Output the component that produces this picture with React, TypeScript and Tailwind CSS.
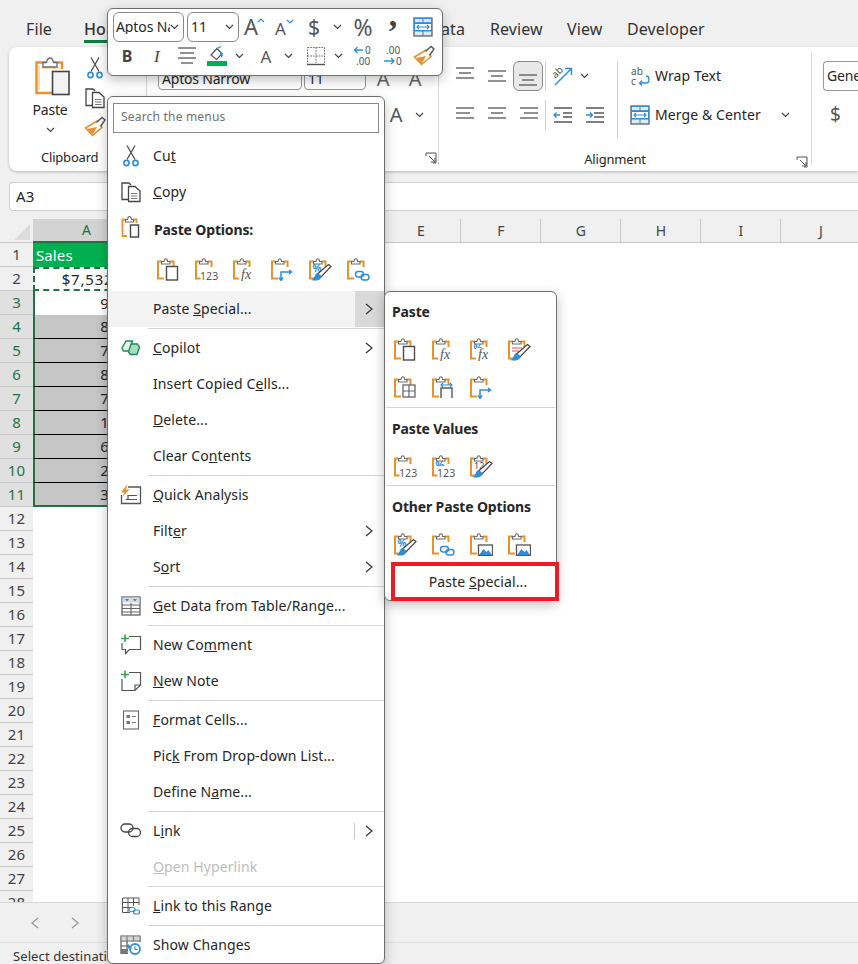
import React from "react";

const O = "#e8912d";
const G = "#6a6a6a";
const B = "#2e8fd8";
const D = "#4a4a4a";

function S({ w = 24, h = 24, vb, children, className = "" }: { w?: number; h?: number; vb?: string; children?: React.ReactNode; className?: string }) {
  return (
    <svg width={w} height={h} viewBox={vb ?? `0 0 ${w} ${h}`} fill="none" className={`shrink-0 ${className}`}>
      {children}
    </svg>
  );
}

function Clip({ children }: { children?: React.ReactNode }) {
  return (
    <S>
      <path d="M6 4.5H2V21.5H8" stroke={O} strokeWidth="2" />
      <path d="M13.5 4.5H17.5V10" stroke={O} strokeWidth="2" />
      <path d="M5.5 7V4.5H8C8.2 2.8 8.9 1.8 9.8 1.8S11.4 2.8 11.6 4.5H14V7Z" stroke={G} fill="#fff" strokeWidth="1.1" />
      {children}
    </S>
  );
}

const Page = () => <rect x="10.5" y="9.5" width="11" height="13.5" stroke={D} strokeWidth="1.4" fill="#fff" />;
const Num = ({ t = "123" }: { t?: string }) => (
  <>
    <rect x="6.5" y="12" width="17.5" height="12" fill="#fff" />
    <text x="6" y="23" fontSize="10.5" fill="#555" fontFamily="Noto Sans, sans-serif">{t}</text>
  </>
);
const Fx = () => (
  <>
    <rect x="7" y="11" width="17" height="13" fill="#fff" />
    <text x="9" y="22" fontSize="14" fontStyle="italic" fill="#555" fontFamily="Liberation Serif, serif">fx</text>
  </>
);
const Pct = () => <text x="4.5" y="15" fontSize="10" fontWeight="700" fill={B} fontFamily="Noto Sans, sans-serif">%</text>;
const Trans = () => (
  <>
    <rect x="8" y="11" width="16" height="13" fill="#fff" />
    <path d="M11 23V15H21M19 13L21.5 15L19 17M9 20.5L11 23.5L13 20.5" stroke={B} strokeWidth="1.5" />
  </>
);
const Brush = () => (
  <>
    <path d="M9.5 17L20.5 7.5L23 9.5L13 20Z" fill="#fff" stroke="#444" strokeWidth="1.2" />
    <path d="M8 16.5C12 16.5 14 19 13 21C11.5 24 6 24 3.5 23C6 22 6.5 19 8 16.5Z" fill={B} />
  </>
);
const Chain = () => (
  <>
    <rect x="8" y="13" width="16" height="11" fill="#fff" />
    <rect x="9.5" y="14.5" width="8" height="5.5" rx="2.7" stroke={B} strokeWidth="1.4" />
    <rect x="15" y="17.5" width="8" height="5.5" rx="2.7" stroke={B} strokeWidth="1.4" />
  </>
);
const Pic = () => (
  <>
    <rect x="9.5" y="13" width="14" height="10.5" fill="#fff" stroke="#555" strokeWidth="1.3" />
    <path d="M10 23L14.5 17L17.5 20L19.5 18L23 23Z" fill={B} />
  </>
);

const scissors = (
  <S w={20} h={24}>
    <path d="M6 15.5L14 1.5M14 15.5L6 1.5" stroke="#444" strokeWidth="1.2" />
    <circle cx="5.5" cy="19" r="2.6" stroke={B} strokeWidth="1.6" />
    <circle cx="14.5" cy="19" r="2.6" stroke={B} strokeWidth="1.6" />
  </S>
);
const copy = (
  <S w={22} h={22}>
    <path d="M8.5 18.5H2V2H9L11 4" stroke="#444" strokeWidth="1.3" />
    <path d="M8.5 5.5H15L20 10V20.5H8.5Z" stroke="#444" strokeWidth="1.3" fill="#fff" />
    <path d="M11 12.5H17.5M11 15H17.5M11 17.5H17.5" stroke="#777" strokeWidth="1" />
  </S>
);
const painter = (
  <S w={22} h={22}>
    <path d="M1.5 12L13 5L18 11.5L8.5 19.5Z" stroke={O} strokeWidth="1.6" fill="#fff" />
    <path d="M3 13L13 11L8.5 19Z" fill={O} />
    <path d="M12.5 6.5L18 1.5L21 4L16.5 10.5" stroke="#555" strokeWidth="1.4" fill="#fff" />
  </S>
);
const pasteSmall = (
  <S w={20} h={26} vb="0 0 20 26">
    <path d="M5 4.5H1.5V21H6" stroke={O} strokeWidth="1.8" />
    <path d="M12 4.5H15.5V8" stroke={O} strokeWidth="1.8" />
    <path d="M4.5 7V4.5H6.5C6.7 3 7.4 1.5 8.5 1.5S10.3 3 10.5 4.5H12.5V7Z" stroke={G} fill="#fff" strokeWidth="1.1" />
    <rect x="9.5" y="10" width="8" height="12" fill="#fff" stroke="#444" strokeWidth="1.4" />
  </S>
);
const pasteBig = (
  <S w={36} h={40}>
    <path d="M11 5.5H1.5V36H18" stroke={O} strokeWidth="2.4" />
    <path d="M19 5.5H27V12" stroke={O} strokeWidth="2.4" />
    <path d="M6 11H25" stroke="#fbdcae" strokeWidth="2" />
    <path d="M4 8V33" stroke="#fbdcae" strokeWidth="2" />
    <path d="M8 10V5.5H11.5C12 3 13.5 1 15 1S18 3 18.5 5.5H22V10Z" stroke={G} fill="#fff" strokeWidth="1.3" />
    <rect x="17.5" y="14.5" width="16.5" height="23" fill="#f3f3f3" stroke="#444" strokeWidth="1.6" />
  </S>
);
const copilot = (
  <S w={20} h={18}>
    <path d="M5 2H11.5L8.5 12H2.5L1 9Z" stroke="#1f8a55" strokeWidth="1.4" fill="#e4f5ea" />
    <path d="M10 5H16.5L18.5 8L16 15.5H9.5L7.5 13Z" stroke="#1f8a55" strokeWidth="1.4" fill="#a9dcbd" />
  </S>
);
const quick = (
  <S w={22} h={22}>
    <path d="M8 3H20.5V19.5H1.5V11" stroke="#555" strokeWidth="1.3" />
    <path d="M5.5 15.5H17M8 15.5V11.5H17" stroke="#555" strokeWidth="1.2" />
    <path d="M7.5 0L1 8.5H4.5L2 13L9.5 5.5H6Z" fill={O} />
  </S>
);
const getData = (
  <S w={20} h={20}>
    <rect x="1" y="1" width="18" height="18" stroke="#555" strokeWidth="1.2" fill="#fff" />
    <rect x="1.5" y="1.5" width="17" height="5" fill="#d9d9d9" />
    <path d="M4 3L6 5.5L8 3ZM12 3L14 5.5L16 3Z" fill={B} />
    <path d="M1 9H19M1 12.5H19M1 16H19M10 7V19" stroke="#666" strokeWidth="1.2" />
  </S>
);
const comment = (
  <S w={22} h={22}>
    <path d="M9 2.5H20.5V15.5H9.5L5.5 19.5V15.5H2V9" stroke="#555" strokeWidth="1.2" />
    <path d="M5 0.5V8M1 4.5H9" stroke="#2ea64f" strokeWidth="1.6" />
  </S>
);
const note = (
  <S w={22} h={22}>
    <path d="M9 2.5H20.5V15L15 20.5H2V9" stroke="#555" strokeWidth="1.2" />
    <path d="M20.5 15H15V20.5" stroke="#555" strokeWidth="1.2" />
    <path d="M5 0.5V8M1 4.5H9" stroke="#2ea64f" strokeWidth="1.6" />
  </S>
);
const format = (
  <S w={18} h={20}>
    <rect x="1.5" y="1" width="15" height="18" stroke="#666" strokeWidth="1.1" />
    <rect x="4.5" y="5" width="3.5" height="3" fill="#777" />
    <rect x="4.5" y="11" width="3.5" height="3" fill="#777" />
    <path d="M10 6.5H14M10 12.5H14" stroke="#777" strokeWidth="1.1" />
  </S>
);
const link = (
  <S w={22} h={18}>
    <rect x="1" y="2" width="12" height="8" rx="4" stroke="#444" strokeWidth="1.3" />
    <rect x="8.5" y="6.5" width="12" height="8" rx="4" stroke="#444" strokeWidth="1.3" />
  </S>
);
const linkRange = (
  <S w={20} h={20}>
    <path d="M9 16.5H1.5V2H18V9M1.5 6.5H18M7 2V16M12.5 2V10M1.5 11.5H10" stroke="#555" strokeWidth="1" />
    <rect x="8" y="11.5" width="6" height="4" rx="2" stroke={B} strokeWidth="1.2" />
    <rect x="12.5" y="14" width="6" height="4" rx="2" stroke={B} strokeWidth="1.2" />
  </S>
);
const changes = (
  <S w={22} h={22}>
    <path d="M8 19.5H1V2H20V8M1 7H20M7 2V19M13.5 2V7M1 12H8M1 16H8" stroke="#555" strokeWidth="1.2" />
    <rect x="1" y="2" width="19" height="5" fill="#aaa" opacity="0.5" />
    <rect x="1" y="15" width="6" height="5" fill="#777" />
    <circle cx="15" cy="15" r="5" fill="#fff" stroke={B} strokeWidth="1.8" />
    <path d="M15 12.5V15.5H17.5" stroke={B} strokeWidth="1.2" />
    <path d="M8 10V14.5H12.5Z" fill={B} />
  </S>
);

const chev = (
  <svg width="10" height="14" viewBox="0 0 10 14" fill="none" className="shrink-0">
    <path d="M2 2L8 7L2 12" stroke="#333" strokeWidth="1.2" />
  </svg>
);
const Down = () => (
  <svg width="9" height="6" viewBox="0 0 9 6" fill="none" className="shrink-0">
    <path d="M1 1L4.5 4.5L8 1" stroke="#444" strokeWidth="1.2" />
  </svg>
);

type Row = { icon?: React.ReactNode; label: React.ReactNode; sub?: boolean; dis?: boolean; bar?: boolean };
const Item = ({ icon, label, sub, dis, bar }: Row) => (
  <div className="flex h-9 items-center">
    <div className="flex w-[45px] justify-center">{icon}</div>
    <div className={`flex-1 ${dis ? "text-[#bdbdbd]" : ""}`}>{label}</div>
    {bar && <div className="h-4 w-px bg-[#c8c8c8]" />}
    {sub && <div className="flex w-[29px] justify-center pr-[2px]">{chev}</div>}
  </div>
);
const Sep = () => (
  <div className="flex h-[3px] items-center pl-[40px]">
    <div className="h-px w-full bg-[#d4d4d4]" />
  </div>
);

function AlignLines({ ys, widths }: { ys: number[]; widths: [number, number][] }) {
  return (
    <S w={20} h={20}>
      {ys.map((y, i) => (
        <path key={i} d={`M${widths[i][0]} ${y}H${widths[i][1]}`} stroke="#555" strokeWidth="1.3" />
      ))}
    </S>
  );
}
const L3: [number, number][] = [[1, 19], [4, 16], [1, 19]];
const Indent = ({ flip }: { flip?: boolean }) => (
  <S w={20} h={20}>
    <path d="M1 3H19M1 17H19" stroke="#555" strokeWidth="1.3" />
    <path d={flip ? "M9 8H19M9 12H19" : "M10 8H19M10 12H19"} stroke="#555" strokeWidth="1.3" />
    <path d={flip ? "M1 10H7M5 7.5L7.5 10L5 12.5" : "M1 10H7M3.5 7.5L1 10L3.5 12.5"} stroke={B} strokeWidth="1.4" />
  </S>
);
const mergeIcon = (size: number) => (
  <svg width={size} height={size} viewBox="0 0 20 20" fill="none" className="shrink-0">
    <rect x="1" y="1" width="18" height="18" fill="#d8ecfa" stroke="#555" strokeWidth="1.2" />
    <path d="M1 6H19M1 14H19M10 1V6M10 14V19" stroke="#777" strokeWidth="1" />
    <path d="M1.5 1.5H18.5V5.5H1.5Z" stroke={B} strokeWidth="0.8" />
    <rect x="1.5" y="6.5" width="17" height="7" fill="#fff" stroke={B} strokeWidth="1" />
    <path d="M4 10H16M6 8L4 10L6 12M14 8L16 10L14 12" stroke={B} strokeWidth="1.2" />
  </svg>
);
const launcher = (
  <svg width="12" height="12" viewBox="0 0 12 12" fill="none" className="shrink-0">
    <path d="M1 4V1H11V11H8M4 4L10 10M10 6V10H6" stroke="#555" strokeWidth="1" />
  </svg>
);
const C = ({ w = "w-[30px]", children }: { w?: string; children?: React.ReactNode }) => <div className={`flex ${w} items-center justify-center`}>{children}</div>;

const rowVals: Record<number, string> = { 3: "91.00", 4: "84.00", 5: "73.00", 6: "81.00", 7: "74.00", 8: "16.00", 9: "65.00", 10: "28.00", 11: "32.00" };

export default function App() {
  const rows = Array.from({ length: 28 }, (_, i) => i + 1);
  return (
    <div className="relative flex h-[964px] w-[858px] flex-col overflow-hidden bg-[#f0f0f0] font-['Noto_Sans',sans-serif] text-[14px] leading-none tracking-[0.1px] text-[#262626]">
      {/* Tabs */}
      <div className="flex h-[47px] shrink-0 items-center whitespace-nowrap pl-[26px] pt-[10px] text-[16px] text-[#333]">
        <span className="w-[58px]">File</span>
        <span className="relative w-[112px] font-medium">
          Home
          <span className="absolute -bottom-[6px] left-0 h-[3px] w-[30px] bg-[#0f7b3f]" />
        </span>
        <span className="w-[233px]">Insert</span>
        <span className="mr-[25px] w-[36px] text-right">Data</span>
        <span className="mr-[25px] w-[52px]">Review</span>
        <span className="mr-[24px] w-[36px]">View</span>
        <span>Developer</span>
      </div>

      {/* Ribbon */}
      <div className="ml-[9px] flex h-[124px] shrink-0 rounded-l-lg bg-white text-[13px] tracking-[-0.2px] shadow-[0_1px_3px_rgba(0,0,0,0.25)]">
        <div className="my-[6px] flex w-[138px] shrink-0 flex-col border-r border-[#d8d8d8]">
          <div className="flex h-[90px]">
            <div className="ml-[16px] flex w-[50px] flex-col items-center pt-[4px]">
              <div className="ml-[6px]">{pasteBig}</div>
              <span className="mt-[6px] text-[14px]">Paste</span>
              <span className="mt-[10px]"><Down /></span>
            </div>
            <div className="ml-[8px] flex w-[24px] flex-col items-center gap-[7px] pt-[3px]">
              {scissors}
              {copy}
              {painter}
            </div>
          </div>
          <div className="mt-[8px] pl-[32px] text-[13px]">Clipboard</div>
        </div>
        <div className="my-[6px] flex w-[292px] shrink-0 flex-col border-r border-[#d8d8d8]">
          <div className="ml-[11px] mt-[14px] flex items-center gap-[2px]">
            <div className="flex h-[23px] w-[144px] items-center rounded border border-[#999] px-[3px] text-[14px]">Aptos Narrow</div>
            <div className="flex h-[23px] w-[62px] items-center rounded border border-[#999] px-[3px] text-[14px]">11</div>
            <div className="ml-[0px] flex text-[20px] text-[#666]">
              <C w="w-[30px]">A</C>
              <C w="w-[34px]">A</C>
            </div>
          </div>
          <div className="ml-[234px] mt-[10px] flex h-[30px] items-center">
            <C><span className="text-[20px] text-[#555]">A</span></C>
            <C w="w-[16px]"><Down /></C>
          </div>
          <div className="mb-[-3px] mt-auto flex h-[16px] justify-end pr-[1px]">{launcher}</div>
        </div>
        <div className="my-[6px] flex w-[373px] shrink-0 flex-col border-r border-[#d8d8d8]">
          <div className="flex">
            <div className="flex flex-col gap-[9px] pl-[10px] pt-[8px]">
              <div className="flex h-[30px] items-center">
                <C w="w-[32px]"><AlignLines ys={[2, 7, 12]} widths={L3} /></C>
                <C w="w-[32px]"><AlignLines ys={[5, 10, 15]} widths={L3} /></C>
                <div className="flex h-[30px] w-[30px] items-center justify-center rounded-md border border-[#8a8a8a] bg-[#e8e8e8]"><AlignLines ys={[9, 14, 19]} widths={L3} /></div>
                <div className="ml-[2px] h-[30px] w-px bg-[#d0d0d0]" />
                <div className="ml-[6px]">
                  <S w={22} h={22}>
                    <path d="M3 20L19 4M13 3.5H19.5V10" stroke={B} strokeWidth="1.5" />
                    <text x="0" y="11" fontSize="10" fill="#555" transform="rotate(-45 5 8)" fontFamily="Noto Sans, sans-serif">ab</text>
                  </S>
                </div>
                <div className="ml-[6px]"><Down /></div>
              </div>
              <div className="flex h-[30px] items-center">
                <C w="w-[32px]"><AlignLines ys={[3, 8, 13]} widths={[[1, 19], [1, 15], [1, 19]]} /></C>
                <C w="w-[32px]"><AlignLines ys={[3, 8, 13]} widths={L3} /></C>
                <C w="w-[32px]"><AlignLines ys={[3, 8, 13]} widths={[[1, 19], [5, 19], [1, 19]]} /></C>
                <div className="h-[30px] w-px bg-[#d0d0d0]" />
                <C w="w-[34px]"><Indent /></C>
                <C w="w-[30px]"><Indent flip /></C>
              </div>
            </div>
            <div className="ml-[7px] mt-[8px] h-[77px] w-px bg-[#d0d0d0]" />
            <div className="flex flex-col gap-[9px] pl-[12px] pt-[8px] text-[14px] tracking-[0.1px]">
              <div className="flex h-[30px] items-center">
                <S w={22} h={20}>
                  <text x="1" y="9" fontSize="10" fill="#555" fontFamily="Noto Sans, sans-serif">ab</text>
                  <text x="1" y="19" fontSize="10" fill="#555" fontFamily="Noto Sans, sans-serif">c</text>
                  <path d="M10 17H16C20 17 20 10 16 10M12 14.5L9.5 17L12 19.5" stroke={B} strokeWidth="1.4" />
                </S>
                <span className="ml-[3px]">Wrap Text</span>
              </div>
              <div className="flex h-[30px] items-center">
                {mergeIcon(20)}
                <span className="ml-[5px] w-[126px]">Merge &amp; Center</span>
                <Down />
              </div>
            </div>
          </div>
          <div className="relative mt-[15px] flex h-[16px] items-center justify-center">
            <span className="pr-[20px]">Alignment</span>
            <span className="absolute right-[3px] top-[3px]">{launcher}</span>
          </div>
        </div>
        <div className="flex flex-col pl-[11px] pt-[14px] text-[14px]">
          <div className="flex h-[30px] w-[60px] items-center rounded-l border-y border-l border-[#999] pl-[3px]">General</div>
          <div className="mt-[14px] pl-[7px] text-[19px] text-[#555]">$</div>
        </div>
      </div>

      {/* Formula bar */}
      <div className="ml-[9px] mt-[11px] flex h-[29px] shrink-0 items-center rounded-l border-y border-l border-[#d0d0d0] bg-white pl-[6px] text-[15px]">A3</div>

      {/* Column headers */}
      <div className="mt-[8px] flex h-[24px] shrink-0 items-center bg-[#f0f0f0] text-[14px] text-[#444]">
        <div className="relative h-full w-[33px] shrink-0 border-b border-[#c8c8c8]">
          <div className="absolute bottom-[2px] right-[3px] h-0 w-0 border-b-[16px] border-l-[16px] border-b-[#dcdcdc] border-l-transparent" />
        </div>
        <div className="flex h-full w-[108px] shrink-0 items-center justify-center border-r border-b-2 border-r-[#c8c8c8] border-b-[#217346] bg-[#d3d3d3] text-[#217346]">A</div>
        {["B", "C", "D", "E", "F", "G", "H", "I", "J"].map((c) => (
          <div key={c} className="flex h-full w-[80px] shrink-0 items-center justify-center border-r border-b border-[#c8c8c8] pl-px">{c}</div>
        ))}
      </div>

      {/* Sheet */}
      <div className="h-[659px] shrink-0 overflow-hidden bg-white">
        {rows.map((r) => {
          const sel = r >= 3 && r <= 11;
          return (
            <div key={r} className="flex h-[24px]">
              <div className={`flex w-[33px] shrink-0 items-center justify-center border-b border-[#c8c8c8] text-[15px] ${sel ? "bg-[#e0e0e0] text-[#217346]" : "bg-[#f0f0f0] text-[#444]"}`}>{r}</div>
              <div className={`flex w-[108px] shrink-0 items-center text-[15px] ${r === 1 ? "bg-[#00b050] pl-[3px] text-white" : "justify-end pr-[2px]"} ${r === 2 ? "border-2 border-dashed border-[#217346] tracking-[0.8px]" : ""} ${sel ? "border-l-2 border-[#217346]" : ""} ${r >= 4 && r <= 10 ? "border-b border-b-black bg-[#c6c6c6]" : ""} ${r === 11 ? "border-b-2 bg-[#c6c6c6]" : ""}`}>
                {r === 1 ? "Sales" : r === 2 ? "$7,532.00" : rowVals[r] ?? ""}
              </div>
            </div>
          );
        })}
      </div>

      {/* Sheet tabs */}
      <div className="flex h-[40px] shrink-0 items-center gap-[30px] border-t border-[#d8d8d8] pl-[30px]">
        <svg width="10" height="14" viewBox="0 0 10 14" fill="none"><path d="M8 2L2 7L8 12" stroke="#999" strokeWidth="1.3" /></svg>
        <svg width="10" height="14" viewBox="0 0 10 14" fill="none"><path d="M2 2L8 7L2 12" stroke="#999" strokeWidth="1.3" /></svg>
      </div>

      {/* Status */}
      <div className="flex h-[22px] shrink-0 items-center whitespace-nowrap border-t border-[#e0e0e0] pl-[13px] pt-[5px] text-[13px] text-[#333]">Select destination and press ENTER</div>

      {/* Mini toolbar */}
      <div className="absolute left-[107px] top-[8px] z-20 h-[68px] w-[336px] rounded-md border border-[#6e6e6e] bg-white shadow-[0_4px_12px_rgba(0,0,0,0.25)]">
        <div className="mt-[3px] flex h-[30px] items-center pl-[5px]">
          <div className="flex h-[30px] w-[71px] items-center justify-between rounded-md border border-[#8a8a8a] pl-[2px] pr-[4px] text-[14px] tracking-[-0.1px]">
            <span className="w-[54px] overflow-hidden whitespace-nowrap">Aptos Narrow</span>
            <Down />
          </div>
          <div className="ml-[3px] flex h-[30px] w-[52px] items-center justify-between rounded-md border border-[#8a8a8a] pl-[3px] pr-[4px] text-[14px]">
            <span>11</span>
            <Down />
          </div>
          <C><S w={22} h={20}><text x="1" y="18" fontSize="22" fill="#555" fontFamily="Noto Sans, sans-serif">A</text><path d="M15 5L18 2L21 5" stroke={B} strokeWidth="1.2" /></S></C>
          <C><S w={22} h={20}><text x="2" y="18" fontSize="17" fill="#555" fontFamily="Noto Sans, sans-serif">A</text><path d="M14 3L17 6L20 3" stroke={B} strokeWidth="1.2" /></S></C>
          <C><span className="text-[21px] text-[#555]">$</span></C>
          <C w="w-[16px]"><Down /></C>
          <C w="w-[3px]" />
          <C><span className="text-[23px] text-[#555]">%</span></C>
          <C><span className="mb-[24px] font-['Liberation_Serif',serif] text-[34px] font-bold text-[#444]">,</span></C>
          <C>{mergeIcon(20)}</C>
        </div>
        <div className="mt-[-1px] flex h-[30px] items-center pl-[4px]">
          <C><span className="text-[16px] font-bold text-[#444]">B</span></C>
          <C><span className="font-['Liberation_Serif',serif] text-[17px] italic text-[#444]">I</span></C>
          <C><AlignLines ys={[2, 7, 12, 17]} widths={[[1, 19], [3, 17], [1, 19], [4, 16]]} /></C>
          <C>
            <S w={22} h={22}>
              <path d="M5 10L11 3.5L16 9L10.5 14.5Z" stroke="#555" strokeWidth="1.2" />
              <path d="M11 3.5L15 1.5" stroke={B} strokeWidth="1.3" />
              <path d="M14 6L17 9L16 13L14 10Z" fill={B} />
              <rect x="1" y="16" width="20" height="5" fill="#00b050" />
            </S>
          </C>
          <C w="w-[14px]"><Down /></C>
          <C w="w-[5px]" />
          <C><span className="text-[17px] text-[#555]">A</span></C>
          <C w="w-[14px]"><Down /></C>
          <C w="w-[6px]" />
          <C>
            <S w={20} h={20}>
              <path d="M1.5 1.5H18.5V18.5H1.5ZM10 1.5V18.5M1.5 10H18.5" stroke="#666" strokeWidth="1" strokeDasharray="1.6 1.2" />
              <path d="M1 18.5H19" stroke="#555" strokeWidth="1.4" />
            </S>
          </C>
          <C w="w-[14px]"><Down /></C>
          <C w="w-[4px]" />
          <C>
            <S w={22} h={22}>
              <path d="M10 5H1.5M4.5 2L1.5 5L4.5 8" stroke={B} strokeWidth="1.3" />
              <text x="12" y="9" fontSize="10" fill="#555" fontFamily="Noto Sans, sans-serif">0</text>
              <text x="3" y="20" fontSize="10" fill="#555" fontFamily="Noto Sans, sans-serif">.00</text>
            </S>
          </C>
          <C>
            <S w={22} h={22}>
              <text x="3" y="9" fontSize="10" fill="#555" fontFamily="Noto Sans, sans-serif">.00</text>
              <path d="M1 16H11M8 13L11 16L8 19" stroke={B} strokeWidth="1.3" />
              <text x="13" y="20" fontSize="10" fill="#555" fontFamily="Noto Sans, sans-serif">0</text>
            </S>
          </C>
          <C>{painter}</C>
        </div>
      </div>

      {/* Context menu */}
      <div className="absolute left-[107px] top-[96px] z-20 h-[868px] w-[278px] rounded-md border border-[#6e6e6e] bg-white pt-[6px] shadow-[0_4px_12px_rgba(0,0,0,0.25)]">
        <div className="mx-[5px] flex h-[30px] w-[266px] items-center border border-[#8a8a8a] pb-[3px] pl-[7px] text-[12px] tracking-[0.2px] text-[#707070]">Search the menus</div>
        <div className="mt-[5px]">
          <Item icon={scissors} label={<>Cu<u>t</u></>} />
          <Item icon={copy} label={<><u>C</u>opy</>} />
          <div className="mt-[2px] flex h-9 items-center">
            <div className="flex w-[46px] justify-center pb-[4px]">{pasteSmall}</div>
            <span className="font-bold tracking-[-0.15px]">Paste Options:</span>
          </div>
          <div className="mt-[3px] flex h-[40px] items-center gap-[14px] pb-[4px] pl-[48px]">
            <Clip><Page /></Clip>
            <Clip><Num /></Clip>
            <Clip><Fx /></Clip>
            <Clip><Trans /></Clip>
            <Clip><Pct /><Brush /></Clip>
            <Clip><Chain /></Clip>
          </div>
          <div className="flex h-9 items-center bg-[#f3f3f3]">
            <div className="w-[45px]" />
            <div className="flex-1">Paste <u>S</u>pecial...</div>
            <div className="flex h-full w-[29px] items-center justify-center bg-[#d9d9d9] pr-[2px]">{chev}</div>
          </div>
          <Sep />
          <Item icon={copilot} label={<><u>C</u>opilot</>} sub />
          <Item label={<>Insert Copied C<u>e</u>lls...</>} />
          <Item label={<><u>D</u>elete...</>} />
          <Item label={<>Clear Co<u>n</u>tents</>} />
          <Sep />
          <Item icon={quick} label={<><u>Q</u>uick Analysis</>} />
          <Item label={<>Filt<u>e</u>r</>} sub />
          <Item label={<>S<u>o</u>rt</>} sub />
          <Sep />
          <Item icon={getData} label={<><u>G</u>et Data from Table/Range...</>} />
          <Sep />
          <Item icon={comment} label={<>New Co<u>m</u>ment</>} />
          <Item icon={note} label={<><u>N</u>ew Note</>} />
          <Sep />
          <Item icon={format} label={<><u>F</u>ormat Cells...</>} />
          <Item label={<>Pic<u>k</u> From Drop-down List...</>} />
          <Item label={<>Define N<u>a</u>me...</>} />
          <Sep />
          <Item icon={link} label={<>L<u>i</u>nk</>} sub bar />
          <Item label={<><u>O</u>pen Hyperlink</>} dis />
          <Sep />
          <Item icon={linkRange} label={<><u>L</u>ink to this Range</>} />
          <Sep />
          <Item icon={changes} label={<>Show Chan<u>g</u>es</>} />
        </div>
      </div>

      {/* Paste submenu */}
      <div className="absolute left-[384px] top-[291px] z-30 h-[310px] w-[173px] rounded-md border border-[#6e6e6e] bg-white shadow-[0_4px_12px_rgba(0,0,0,0.25)]">
        <div className="flex h-[40px] items-center pl-[7px] font-bold tracking-[-0.15px]">Paste</div>
        <div className="mt-[5px] flex gap-[14px] pl-[8px]">
          <Clip><Page /></Clip>
          <Clip><Fx /></Clip>
          <Clip><Pct /><Fx /></Clip>
          <Clip><path d="M5 11H15M5 14H12" stroke="#e88" strokeWidth="1.3" /><Brush /></Clip>
        </div>
        <div className="mt-[14px] flex gap-[14px] pl-[8px]">
          <Clip>
            <rect x="10" y="10" width="12" height="12" fill="#fff" stroke="#666" strokeWidth="1.3" />
            <path d="M16 10V22M10 16H22" stroke="#666" strokeWidth="1.2" />
          </Clip>
          <Clip>
            <path d="M10 23V13H21V23" stroke="#555" strokeWidth="1.4" fill="#fff" />
            <path d="M10 10H21M12 8L10 10L12 12M19 8L21 10L19 12" stroke={B} strokeWidth="1.1" />
          </Clip>
          <Clip><Trans /></Clip>
        </div>
        <div className="mx-[1px] mt-[8px] h-px bg-[#d4d4d4]" />
        <div className="flex h-[41px] items-center pl-[7px] font-bold tracking-[-0.15px]">Paste Values</div>
        <div className="mt-[5px] flex gap-[14px] pl-[8px]">
          <Clip><Num /></Clip>
          <Clip><Pct /><Num /></Clip>
          <Clip><text x="5" y="15" fontSize="9" fill="#555" fontFamily="Noto Sans, sans-serif">12</text><Brush /></Clip>
        </div>
        <div className="mx-[1px] mt-[7px] h-px bg-[#d4d4d4]" />
        <div className="flex h-[41px] items-center pl-[7px] font-bold tracking-[-0.15px]">Other Paste Options</div>
        <div className="mt-[5px] flex gap-[14px] pl-[8px]">
          <Clip><Pct /><Brush /></Clip>
          <Clip><Chain /></Clip>
          <Clip><Pic /></Clip>
          <Clip><Chain /><Pic /></Clip>
        </div>
      </div>

      {/* Highlighted Paste Special */}
      <div className="absolute left-[391px] top-[562px] z-40 flex h-[39px] w-[168px] items-center justify-center border-[4px] border-[#ed1c24] bg-white pl-[6px]">
        <span>Paste <u>S</u>pecial...</span>
      </div>
    </div>
  );
}
